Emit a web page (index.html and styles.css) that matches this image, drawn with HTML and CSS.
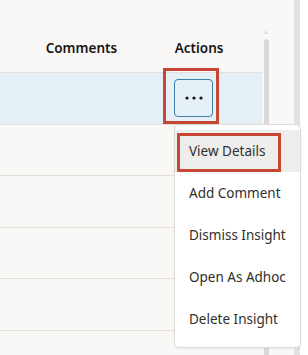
FILE: index.html
```html
<!DOCTYPE html>
<html lang="en">
<head>
    <meta charset="UTF-8">
    <meta name="viewport" content="width=device-width, initial-scale=1.0">
    <title>Insights</title>
    <link rel="stylesheet" href="styles.css">
</head>
<body>

<div class="frame">
    <div class="pane">
        <div class="grid">
            <div class="row head">
                <div class="cell lead"></div>
                <div class="cell comments">Comments</div>
                <div class="cell actions">Actions</div>
            </div>
            <div class="row selected">
                <div class="cell lead"></div>
                <div class="cell comments"></div>
                <div class="cell actions">
                    <button class="more" type="button" aria-label="Actions">
                        <svg width="18" height="4" viewBox="0 0 18 4">
                            <circle cx="2" cy="2" r="1.6"/>
                            <circle cx="9" cy="2" r="1.6"/>
                            <circle cx="16" cy="2" r="1.6"/>
                        </svg>
                        <span class="mark mark-button"></span>
                    </button>
                </div>
            </div>
            <div class="row"></div>
            <div class="row"></div>
            <div class="row"></div>
            <div class="row"></div>
            <div class="row last">
                <div class="cell lead"></div>
                <div class="cell comments"></div>
                <div class="cell actions"><span class="peek">W</span></div>
            </div>
        </div>
        <div class="scroll">
            <span class="arrow"></span>
            <span class="thumb"></span>
        </div>
    </div>
    <div class="edge"></div>
    <div class="rest"></div>

    <!-- Actions menu -->
    <ul class="menu">
        <li class="item active">View Details<span class="mark mark-item"></span></li>
        <li class="item">Add Comment</li>
        <li class="item">Dismiss Insight</li>
        <li class="item">Open As Adhoc</li>
        <li class="item">Delete Insight</li>
    </ul>
</div>

</body>
</html>
```

FILE: styles.css
```css
body {
    margin: 0;
    font-family: 'Noto Sans', 'Open Sans', sans-serif;
    color: #161513;
    background: #fff;
}
.frame {
    position: relative;
    display: flex;
    height: 355px;
    overflow: hidden;
}
.pane {
    display: flex;
    width: 294px;
    background: #f9f8f6;
}
.grid {
    width: 262px;
}
.row {
    display: flex;
    box-sizing: border-box;
    height: 51.5px;
    border-bottom: 1px solid #e3e0dc;
}
.row.head {
    height: 73px;
    align-items: flex-end;
    padding-bottom: 14px;
    font-size: 13.5px;
    font-weight: 600;
    line-height: 20px;
}
.row.selected {
    background: #e5eff6;
    align-items: center;
}
.row.last {
    border-bottom: none;
}
.cell.lead {
    width: 46px;
}
.cell.comments {
    width: 128px;
}
.cell.actions {
    width: 88px;
}
.head .actions {
    padding-left: 2px;
}
.more {
    position: relative;
    display: flex;
    align-items: center;
    justify-content: center;
    width: 39px;
    height: 38px;
    padding: 0;
    background: transparent;
    border: 1px solid #3b7ea8;
    border-radius: 4px;
    fill: #161513;
}
.mark {
    position: absolute;
    box-sizing: border-box;
    border: 3px solid #c74634;
}
.mark-button {
    left: -12px;
    top: -12px;
    width: 56px;
    height: 56px;
}
.peek {
    display: block;
    padding: 19px 0 0 11px;
    font-size: 14px;
    line-height: 20px;
    color: #312d2a;
}
.scroll {
    position: relative;
    width: 32px;
}
.arrow {
    position: absolute;
    left: 2px;
    top: 30px;
    width: 0;
    height: 0;
    border-left: 2.5px solid transparent;
    border-right: 2.5px solid transparent;
    border-bottom: 4px solid #dcdcdc;
}
.thumb {
    position: absolute;
    left: 2px;
    top: 39px;
    bottom: -10px;
    width: 5px;
    border-radius: 3px 3px 0 0;
    background: #d9d9d9;
}
.edge {
    width: 6px;
    background: #e1e1e1;
}
.rest {
    flex: 1;
    background: #fff;
}
.menu {
    position: absolute;
    left: 174px;
    top: 124px;
    width: 127px;
    margin: 0;
    padding: 5px 0 7px;
    list-style: none;
    box-sizing: border-box;
    background: #fff;
    border: 1px solid #dedbd7;
    border-radius: 5px;
    box-shadow: 0 1px 3px rgba(0,0,0,0.06);
}
.item {
    position: relative;
    height: 42px;
    padding-left: 14px;
    font-size: 13.5px;
    line-height: 42px;
    color: #312d2a;
    white-space: nowrap;
}
.item.active {
    background: #ededeb;
}
.mark-item {
    left: 2px;
    top: 3px;
    width: 104px;
    height: 39px;
}
```
